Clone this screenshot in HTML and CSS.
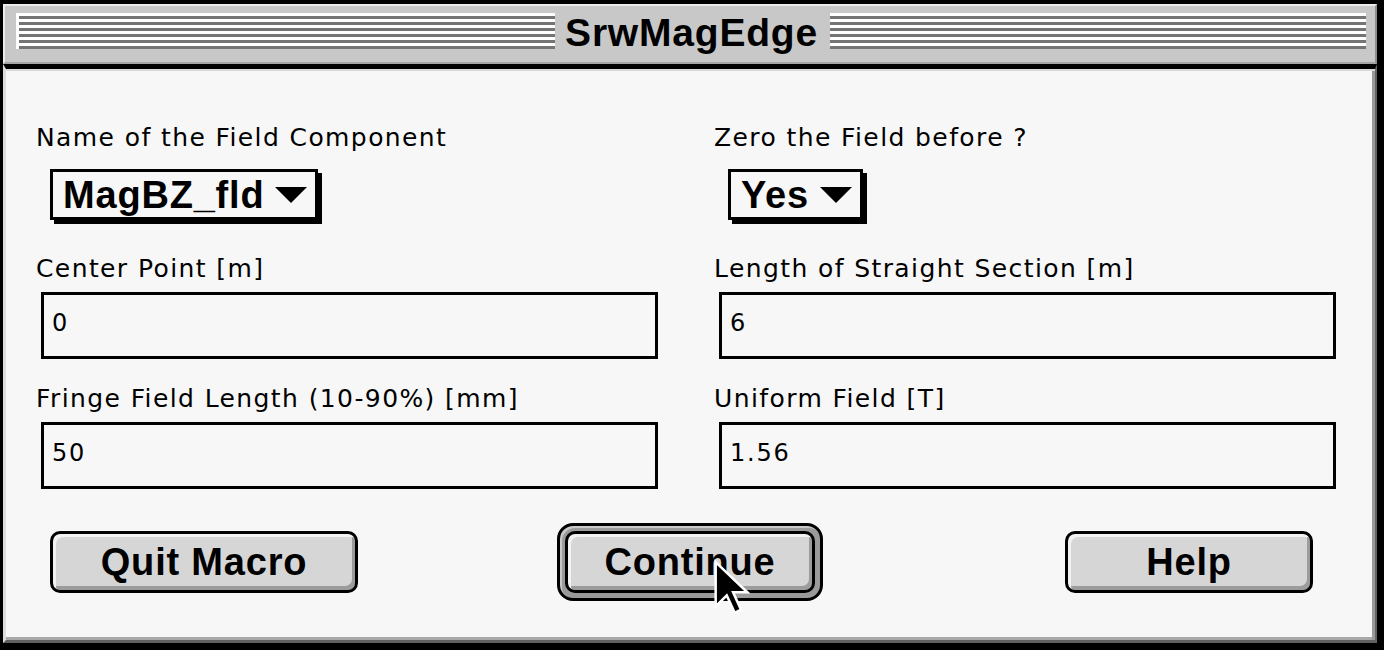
FILE: index.html
```html
<!DOCTYPE html>
<html lang="en">
<head>
    <meta charset="UTF-8">
    <meta name="viewport" content="width=device-width, initial-scale=1.0">
    <title>SrwMagEdge</title>
    <link rel="stylesheet" href="styles.css">
</head>
<body>

    <div class="window">
        <!-- Title bar -->
        <div class="titlebar">
            <span class="stripes left"></span>
            <span class="title">SrwMagEdge</span>
            <span class="stripes right"></span>
        </div>

        <div class="content">
            <div class="fields">
                <div class="field">
                    <label>Name of the Field Component</label>
                    <div class="popup"><span>MagBZ_fld</span><span class="arrow"></span></div>
                </div>
                <div class="field">
                    <label>Zero the Field before ?</label>
                    <div class="popup"><span>Yes</span><span class="arrow"></span></div>
                </div>
                <div class="field">
                    <label for="center">Center Point [m]</label>
                    <input type="text" id="center" value="0">
                </div>
                <div class="field">
                    <label for="straight">Length of Straight Section [m]</label>
                    <input type="text" id="straight" value="6">
                </div>
                <div class="field">
                    <label for="fringe">Fringe Field Length (10-90%) [mm]</label>
                    <input type="text" id="fringe" value="50">
                </div>
                <div class="field">
                    <label for="uniform">Uniform Field [T]</label>
                    <input type="text" id="uniform" value="1.56">
                </div>
            </div>

            <!-- Buttons -->
            <div class="buttons">
                <button class="btn quit">Quit Macro</button>
                <div class="default-ring">
                    <button class="btn continue">Continue</button>
                    <svg class="cursor" width="39" height="57" viewBox="-1 -1 12 18">
                        <polygon points="0,0 0,14 3.5,10.5 6,16 8,15 5.5,9.5 10,9.5" fill="#000" stroke="#fff" stroke-width="0.8" stroke-linejoin="miter"/>
                    </svg>
                </div>
                <button class="btn help">Help</button>
            </div>
        </div>
    </div>

</body>
</html>
```

FILE: styles.css
```css
/* Reset */
* {
    margin: 0;
    padding: 0;
    box-sizing: border-box;
}

body {
    width: 1384px;
    height: 650px;
    overflow: hidden;
    background-color: #000;
    font-family: "DejaVu Sans", sans-serif;
    color: #000;
}

.window {
    width: 1374px;
    height: 639px;
    margin: 4px 7px 7px 3px;
    display: flex;
    flex-direction: column;
}

/* Title bar */
.titlebar {
    height: 60px;
    display: flex;
    align-items: flex-start;
    padding: 7px 9px 0 11px;
    background-color: #c8c8c8;
    border-top: 2px solid #ececec;
    border-left: 2px solid #ececec;
    border-right: 2px solid #8f8f8f;
    border-bottom: 2px solid #a4a4a4;
}

.stripes {
    flex: 1;
    height: 36px;
    background: repeating-linear-gradient(#fff 0 3px, #747474 3px 6px);
}

.stripes.left {
    border-left: 3px solid #fff;
}

.title {
    padding: 3px 12px 0 10px;
    font: bold 39px/33px "Liberation Sans", sans-serif;
    letter-spacing: 0.8px;
}

/* Dialog body */
.content {
    flex: 1;
    padding: 54px 39px 0 30px;
    background-color: #f7f7f7;
    border-top: 5px solid #000;
    border-left: 3px solid #dcdcdc;
    border-right: 2px solid #666;
    border-bottom: 3px solid #606060;
    box-shadow: inset 0 2px 0 #dadada, inset -3px 0 0 #9a9a9a, inset 0 -3px 0 #a8a8a8;
}

.fields {
    display: grid;
    grid-template-columns: 622px 622px;
    column-gap: 56px;
    row-gap: 25px;
}

.field label {
    display: block;
    margin-bottom: 8px;
    font-size: 25px;
    line-height: 30px;
    letter-spacing: 1.4px;
    white-space: nowrap;
}

.field input {
    display: block;
    width: 617px;
    height: 67px;
    margin-left: 5px;
    padding: 0 8px 6px;
    border: 3px solid #000;
    background: transparent;
    font: 24px "DejaVu Sans", sans-serif;
    letter-spacing: 1.8px;
    color: #000;
    outline: none;
}

/* Popup menus */
.popup {
    display: inline-flex;
    align-items: center;
    gap: 11px;
    height: 51px;
    margin: 8px 0 9px 14px;
    padding: 0 8px 0 10px;
    background-color: #f7f7f7;
    border: 3px solid #000;
    box-shadow: 4px 4px 0 #000;
    font: bold 38px/1 "Liberation Sans", sans-serif;
    letter-spacing: 0.8px;
}

.popup .arrow {
    width: 0;
    height: 0;
    border-left: 16px solid transparent;
    border-right: 16px solid transparent;
    border-top: 16px solid #000;
}

/* Buttons */
.buttons {
    display: flex;
    align-items: center;
    margin-top: 34px;
    padding-left: 14px;
}

.btn {
    display: block;
    height: 62px;
    background-color: #d6d6d6;
    border: 3px solid #000;
    border-radius: 10px;
    box-shadow: inset 3px 3px 0 #f2f2f2, inset -3px -4px 0 #9c9c9c;
    font: bold 38px/1 "Liberation Sans", sans-serif;
    letter-spacing: 0.8px;
    color: #000;
    cursor: pointer;
}

.quit {
    width: 308px;
}

.default-ring {
    position: relative;
    margin-left: 199px;
    padding: 5px;
    background-color: #9a9a9a;
    border: 3px solid #000;
    border-radius: 16px;
    box-shadow: inset 2px 2px 0 #c8c8c8;
}

.continue {
    width: 250px;
}

.help {
    width: 248px;
    margin-left: 242px;
}

/* Mouse pointer over the default button */
.cursor {
    position: absolute;
    left: 152px;
    top: 33px;
}
```
